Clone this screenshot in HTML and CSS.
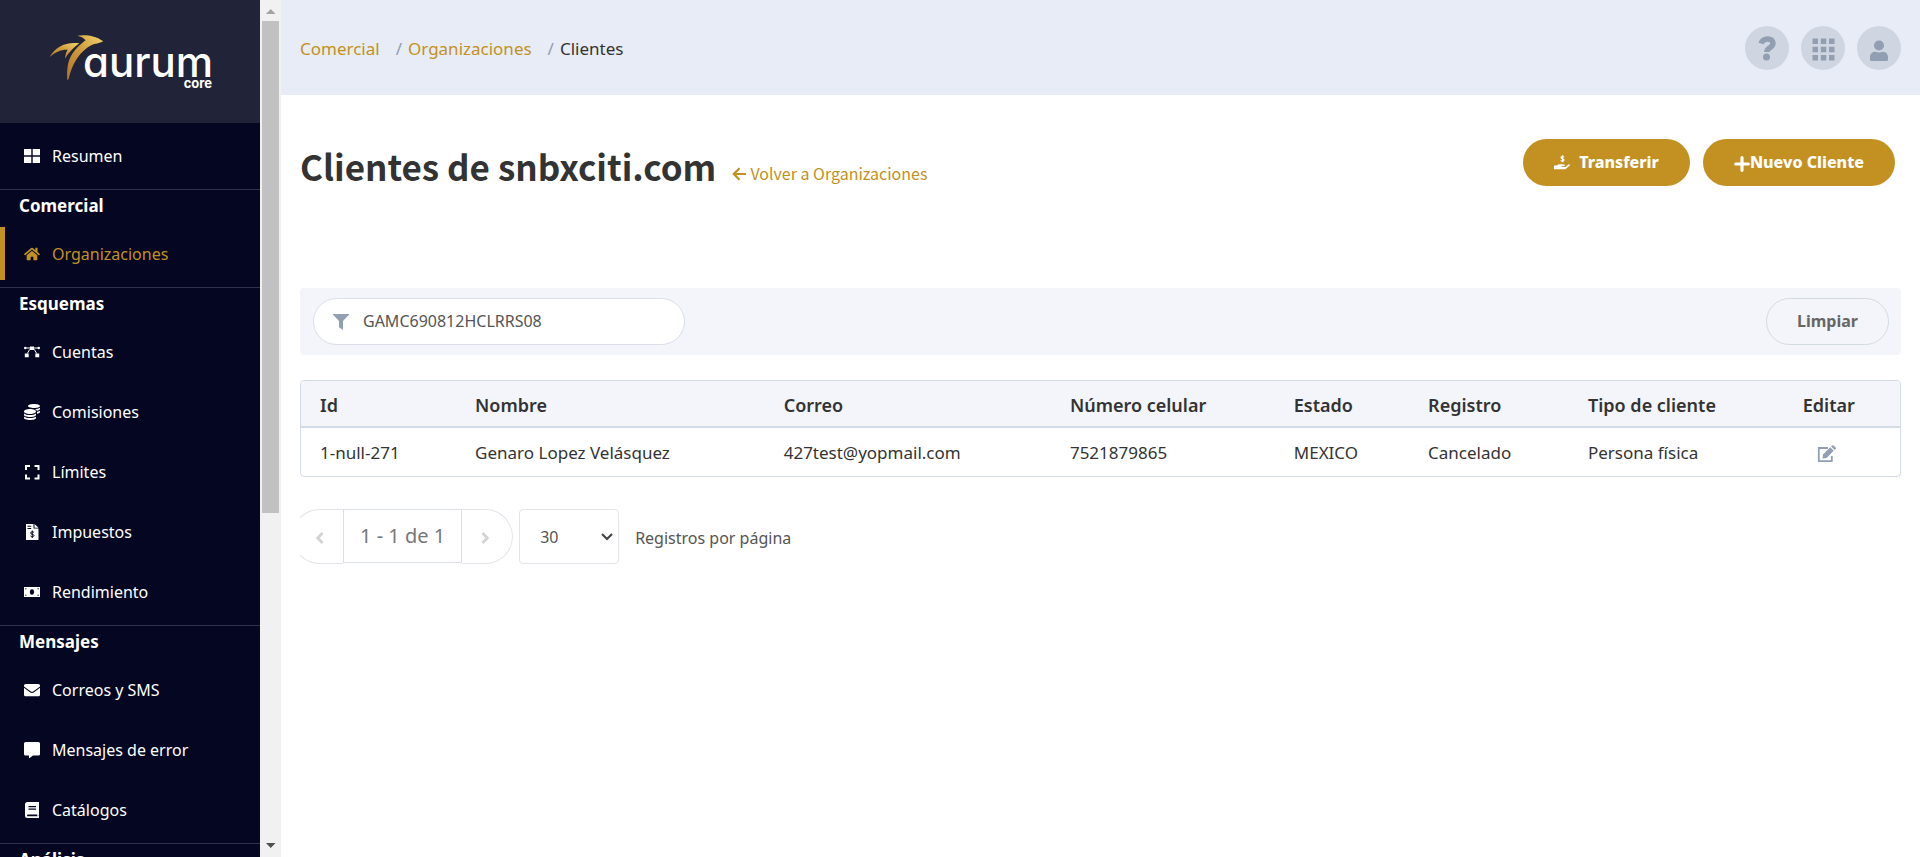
FILE: index.html
```html
<!DOCTYPE html>
<html lang="es">
<head>
<meta charset="utf-8">
<title>Clientes de snbxciti.com</title>
<link rel="stylesheet" href="styles.css">
</head>
<body>
<div class="app">
  <aside class="sidebar">
    <div class="brand">
      <svg class="logo" viewBox="0 0 168 60" role="img" aria-label="aurum core">
        <defs>
          <linearGradient id="gold" x1="0" y1="1" x2="1" y2="0">
            <stop offset="0" stop-color="#b0742a"/>
            <stop offset=".5" stop-color="#cf9a3c"/>
            <stop offset="1" stop-color="#f3d36b"/>
          </linearGradient>
        </defs>
        <g transform="scale(.33333) translate(-144 -90)" fill="url(#gold)">
          <path d="M232 107C255 103 287 106 310 124C298 131 285 131 275 135C240 153 216 190 206 237L202 241C199 205 205 180 216 163C228 144 246 129 257 121C251 113 242 109 232 107Z"/>
          <path d="M149 171C165 140 200 124 238 130C226 139 216 148 209 157C203 163 199 169 196 176C195 165 199 156 203 149C184 148 165 156 149 171Z"/>
        </g>
        <text class="logo-name" x="165" y="47">aurum</text>
        <text class="logo-sub" x="164" y="58">core</text>
      </svg>
    </div>
    <nav class="nav">
      <div class="nav-group nav-group-first">
        <a class="nav-item" href="#"><svg class="icon" viewBox="0 0 16 16"><path d="M0 1h7.3v6.3H0zM8.7 1H16v6.3H8.700zM0 8.700h7.300V15H0zM8.700 8.700H16V15H8.700z"/></svg>Resumen</a>
      </div>
      <div class="nav-group">
        <h2 class="nav-title">Comercial</h2>
        <a class="nav-item active" href="#"><svg class="icon" viewBox="0 0 576 512"><path d="M280.400 148.300L96 300.100V464a16 16 0 0 0 16 16l112.100-.3a16 16 0 0 0 15.900-16V368a16 16 0 0 1 16-16h64a16 16 0 0 1 16 16v95.600a16 16 0 0 0 16 16.100L464 480a16 16 0 0 0 16-16V300L295.700 148.300a12.200 12.200 0 0 0-15.300 0zM571.600 251.500L488 182.600V44a12 12 0 0 0-12-12h-56a12 12 0 0 0-12 12v72.600L318.500 43a48 48 0 0 0-61 0L4.300 251.500a12 12 0 0 0-1.600 16.900l25.500 31a12 12 0 0 0 16.900 1.600l235.200-193.700a12.200 12.200 0 0 1 15.300 0L530.900 301a12 12 0 0 0 16.900-1.600l25.500-31a12 12 0 0 0-1.700-16.900z"/></svg>Organizaciones</a>
      </div>
      <div class="nav-group">
        <h2 class="nav-title">Esquemas</h2>
        <a class="nav-item" href="#"><svg class="icon" viewBox="0 0 16 16"><path d="M6 2.500h4v3.500H6zM.8 9.500h3.900v3.800H.8zM11.300 9.500h3.900v3.800h-3.900z"/><circle cx="1.200" cy="4" r="1.200"/><circle cx="14.800" cy="4" r="1.200"/><path d="M1.500 4H6M10 4h4.500M5.800 5.300L3.300 9.500M10.200 5.300l2.500 4.200" fill="none" stroke="currentColor"/></svg>Cuentas</a>
        <a class="nav-item" href="#"><svg class="icon" viewBox="0 0 512 512"><path d="M0 405.300V448c0 35.300 86 64 192 64s192-28.700 192-64v-42.700C342.700 434.400 267.200 448 192 448S41.300 434.400 0 405.300zM320 128c106 0 192-28.700 192-64S426 0 320 0 128 28.700 128 64s86 64 192 64zM0 300.400V352c0 35.300 86 64 192 64s192-28.700 192-64v-51.600c-41.300 34-116.900 51.600-192 51.600S41.300 334.400 0 300.400zm416 11c57.300-11.100 96-31.700 96-55.400v-42.700c-23.200 16.400-57.300 27.600-96 34.500v63.600zM192 160C86 160 0 195.800 0 240s86 80 192 80 192-35.800 192-80-86-80-192-80zm219.300 56.300c60-10.800 100.700-32 100.700-56.300v-42.700c-35.500 25.100-96.500 38.600-160.700 41.800 29.500 14.300 51.200 33.500 60 57.200z"/></svg>Comisiones</a>
        <a class="nav-item" href="#"><svg class="icon" viewBox="0 0 16 16"><path d="M6 2H2v4M10.500 2h4v4M2 10.500v4h4M14.500 10.500v4h-4" fill="none" stroke="currentColor" stroke-width="2"/></svg>Límites</a>
        <a class="nav-item" href="#"><svg class="icon" viewBox="0 0 16 16"><path fill-rule="evenodd" d="M2 0h7.500v4.500H14.500V16H2zM3.500 1.700v1h3.700v-1zM3.500 4v1h3.700V4z"/><path d="M10.500 0L14.500 3.700H10.500z"/><path d="M10 8.500C9.500 7.600 6.600 7.500 6.600 9s3.400 1 3.400 2.500-3 1.500-3.500.5M8.250 6.500v7.500" fill="none" stroke="#040622"/></svg>Impuestos</a>
        <a class="nav-item" href="#"><svg class="icon" viewBox="0 0 16 16"><path fill-rule="evenodd" d="M0 3h16v10H0zM1.300 5.600Q2.600 5.600 2.600 4.300H1.300zM14.700 5.600Q13.400 5.600 13.400 4.300h1.300zM1.300 10.400q1.300 0 1.300 1.300H1.300zM14.700 10.400q-1.300 0-1.300 1.300h1.300zM8 5.200C5.200 5.200 5.200 10.800 8 10.800s2.800-5.600 0-5.600z"/></svg>Rendimiento</a>
      </div>
      <div class="nav-group">
        <h2 class="nav-title">Mensajes</h2>
        <a class="nav-item" href="#"><svg class="icon" viewBox="0 0 16 16"><path d="M1.500 2h13A1.500 1.500 0 0 1 16 3.500v.9L9.500 9.300Q8 10.300 6.500 9.300L0 4.400v-.9A1.500 1.500 0 0 1 1.500 2z"/><path d="M0 5.800l5.900 4.400Q8 11.600 10.100 10.200L16 5.800v7a1.500 1.500 0 0 1-1.500 1.500h-13A1.500 1.500 0 0 1 0 12.800z"/></svg>Correos y SMS</a>
        <a class="nav-item" href="#"><svg class="icon" viewBox="0 0 16 16"><path d="M1.500 0h13A1.500 1.500 0 0 1 16 1.500v10.500a1.500 1.500 0 0 1-1.500 1.500H9L5 16.500v-3H1.500A1.500 1.500 0 0 1 0 12V1.500A1.500 1.500 0 0 1 1.500 0z"/></svg>Mensajes de error</a>
        <a class="nav-item" href="#"><svg class="icon" viewBox="0 0 16 16"><path fill-rule="evenodd" d="M3.500 0H15v12.500q-.6 1 0 2.300V16H3.500A2.500 2.500 0 0 1 1 13.500v-11A2.500 2.500 0 0 1 3.500 0zM4.500 4v1.200h7.500V4zM4.500 6.500v1.200h7.500V6.500zM3.700 12.500q-1.700.9 0 1.800h9.600v-1.800z"/></svg>Catálogos</a>
      </div>
      <div class="nav-group">
        <h2 class="nav-title">Análisis</h2>
      </div>
    </nav>
  </aside>
  <div class="scrollbar" aria-hidden="true">
    <svg class="scroll-arrow scroll-up" viewBox="0 0 21 21"><path d="M6 14h9.500L10.750 9z"/></svg>
    <div class="scroll-track"><div class="scroll-thumb"></div></div>
    <svg class="scroll-arrow" viewBox="0 0 21 21"><path d="M6 7h9.500L10.750 12z"/></svg>
  </div>
  <div class="content">
    <header class="topbar">
      <nav class="crumbs" aria-label="Ruta">
        <a href="#">Comercial</a><span class="sep">/</span><a href="#">Organizaciones</a><span class="sep">/</span><span>Clientes</span>
      </nav>
      <div class="tools">
        <button class="tool" aria-label="Ayuda"><svg viewBox="0 0 44 44"><path d="M16 17.500C18 11.500 28 11.500 28 17.300C28 22 21.800 21.500 21.800 26" fill="none" stroke="currentColor" stroke-width="5.500"/><circle cx="21.500" cy="31" r="3.500"/></svg></button>
        <button class="tool" aria-label="Aplicaciones"><svg viewBox="0 0 44 44"><path d="M11.500 12.500h5.500v5.500h-5.500zM19.800 12.500h5.500v5.500h-5.500zM28 12.500h5.500v5.500h-5.500zM11.500 20.800h5.500v5.500h-5.500zM19.800 20.800h5.500v5.500h-5.500zM28 20.800h5.500v5.500h-5.500zM11.500 29h5.500v5.500h-5.500zM19.800 29h5.500v5.500h-5.500zM28 29h5.500v5.500h-5.500z"/></svg></button>
        <button class="tool" aria-label="Usuario"><svg viewBox="0 0 44 44"><circle cx="22" cy="19.500" r="5"/><path d="M13 34.500v-3c0-4 2.500-5.700 5.500-5.700q3.500 1.200 7 0c3 0 5.500 1.700 5.500 5.700v2q0 1.500-1.500 1.500h-15Q13 35 13 34z"/></svg></button>
      </div>
    </header>
    <main class="main">
      <div class="heading">
        <div class="heading-text">
          <h1>Clientes de snbxciti.com</h1>
          <a class="back" href="#"><svg viewBox="0 0 14 14"><path d="M14 7H2M7.500 1.200L1.800 7l5.700 5.800" fill="none" stroke="currentColor" stroke-width="2.200"/></svg>Volver a Organizaciones</a>
        </div>
        <div class="actions">
          <button class="btn btn-transfer"><svg viewBox="0 0 16 16"><path d="M0 10.500h2.500q1.700-1.300 3.500-1.300h4q1 .2.900 1.200-.2.900-1.200.9H7.500v.6h4L14.700 9.300q1.300-.2 1.300 1L11.500 14.300H0z"/><path d="M10 2.300C9.500 1.200 7 1.300 7 2.600S10 3.500 10 5 7.300 6.400 6.800 5.200M8.500.300v7" fill="none" stroke="currentColor" stroke-width="1.200"/></svg>Transferir</button>
          <button class="btn btn-new"><svg viewBox="0 0 14 14"><path d="M7 1.500v11M1.500 7h11" stroke="currentColor" stroke-width="2.800" stroke-linecap="round"/></svg>Nuevo Cliente</button>
        </div>
      </div>
      <div class="filter">
        <label class="search">
          <svg viewBox="0 0 16 16"><path d="M0 0h16q.2.600-.300 1.100L10 7v9L6 13.300V7L.300 1.100Q-.200.600 0 0z"/></svg>
          <input type="text" value="GAMC690812HCLRRS08" aria-label="Filtrar clientes">
        </label>
        <button class="clear">Limpiar</button>
      </div>
      <div class="table-box">
        <table>
          <colgroup><col class="c-id"><col class="c-name"><col class="c-mail"><col class="c-phone"><col class="c-state"><col class="c-reg"><col class="c-type"><col class="c-edit"></colgroup>
          <thead><tr><th>Id</th><th>Nombre</th><th>Correo</th><th>Número celular</th><th>Estado</th><th>Registro</th><th>Tipo de cliente</th><th class="edit-cell">Editar</th></tr></thead>
          <tbody><tr><td>1-null-271</td><td>Genaro Lopez Velásquez</td><td>427test@yopmail.com</td><td>7521879865</td><td>MEXICO</td><td>Cancelado</td><td>Persona física</td><td class="edit-cell"><button class="edit" aria-label="Editar"><svg viewBox="0 0 20 18"><path d="M11 3H1.800v13.200h13V11" fill="none" stroke="currentColor" stroke-width="1.800"/><path d="M5.500 13.500l.5-4L13.300 2.300l3.400 3.400L9.500 13z"/><path d="M14.100 1.500l1-1q.8-.7 1.600 0l1.900 1.900q.7.800 0 1.600l-1 1z"/></svg></button></td></tr></tbody>
        </table>
      </div>
      <div class="pager">
        <div class="pages">
          <button class="page-btn prev" aria-label="Anterior"><svg viewBox="0 0 10 14"><path d="M7.500 2L2.700 7l4.800 5" fill="none" stroke="currentColor" stroke-width="2.800"/></svg></button>
          <span class="range">1 - 1 de 1</span>
          <button class="page-btn next" aria-label="Siguiente"><svg viewBox="0 0 10 14"><path d="M2.500 2l4.800 5-4.800 5" fill="none" stroke="currentColor" stroke-width="2.800"/></svg></button>
        </div>
        <div class="select">
          <select id="size"><option>30</option></select>
          <svg viewBox="0 0 12 8"><path d="M1 1l5 5 5-5" fill="none" stroke="currentColor" stroke-width="2.200"/></svg>
        </div>
        <label class="size-label" for="size">Registros por página</label>
      </div>
    </main>
  </div>
</div>
</body>
</html>
```
FILE: styles.css
```css
* { box-sizing: border-box; }

body {
  margin: 0;
  background: #fff;
  color: #333;
  font-family: "Noto Sans", sans-serif;
  font-size: 16px;
  line-height: 24px;
}

a { text-decoration: none; }
button, input, select { font: inherit; color: inherit; margin: 0; }
svg { display: block; fill: currentColor; }

.app { display: flex; min-height: 100vh; }

/* Sidebar */
.sidebar {
  flex: 0 0 260px;
  height: 100vh;
  overflow: hidden;
  background: #040622;
  color: #fff;
}
.brand { padding: 30px 44px 33px 48px; background: #212338; }
.logo { width: 168px; height: 60px; }
.logo-name {
  fill: #fff;
  font-family: Inter, sans-serif;
  font-size: 42px;
  font-weight: 500;
  font-feature-settings: "cv11";
  text-anchor: end;
}
.logo-sub {
  fill: #fff;
  font-family: Inter, sans-serif;
  font-size: 13px;
  font-weight: 700;
  text-anchor: end;
}
.nav-group { border-top: 1px solid #2e3150; }
.nav-group-first { border-top: 0; padding-top: 6px; }
.nav-title {
  margin: 0;
  padding: 4px 19px 9px;
  font-size: 17px;
  font-weight: 700;
  line-height: 24px;
}
.nav-item {
  display: flex;
  align-items: center;
  gap: 12px;
  height: 53px;
  margin-bottom: 7px;
  padding-left: 24px;
  color: #fff;
}
.nav-item.active {
  padding-left: 19px;
  border-left: 5px solid #c29121;
  color: #c29121;
}
.icon { width: 16px; height: 16px; }

.scrollbar {
  flex: 0 0 21px;
  display: flex;
  flex-direction: column;
  height: 100vh;
  background: #f1f1f1;
}
.scroll-arrow { width: 21px; height: 21px; color: #505050; }
.scroll-up { color: #a3a3a3; }
.scroll-track { flex: 1; padding: 0 2px; }
.scroll-thumb { height: 60.4%; background: #c1c1c1; }

/* Top bar */
.content { flex: 1; min-width: 0; }
.topbar {
  display: flex;
  align-items: center;
  justify-content: space-between;
  height: 95px;
  padding: 0 19px;
  background: #e8ecf7;
}
.crumbs { display: flex; padding-top: 2px; font-size: 17px; }
.crumbs a, .back { color: #c29121; }
.sep { margin: 0 6px 0 16px; color: #929eb2; }
.tools { display: flex; gap: 12px; }
.tool {
  width: 44px;
  height: 44px;
  padding: 0;
  border: 0;
  border-radius: 50%;
  background: #cfd6e2;
  color: #929eb2;
}

/* Page heading */
.main { padding: 44px 19px 24px; }
.heading {
  display: flex;
  align-items: flex-start;
  justify-content: space-between;
  margin-bottom: 96px;
  padding-right: 6px;
}
.heading-text {
  display: flex;
  align-items: baseline;
  gap: 16px;
  font-family: "Noto Sans CJK JP", "Noto Sans", sans-serif;
}
h1 { margin: 0; font-size: 35px; font-weight: 600; line-height: 53px; }
.back { display: flex; align-items: center; gap: 4px; font-size: 16px; }
.back svg { width: 14px; height: 14px; margin-top: 3px; }
.actions { display: flex; gap: 13px; }
.btn {
  display: flex;
  align-items: center;
  height: 47px;
  padding: 0 31px 2px;
  border: 0;
  border-radius: 24px;
  background: #c29121;
  color: #fff;
  font-weight: 800;
}
.btn-transfer { gap: 9px; }
.btn-transfer svg { width: 16px; height: 16px; margin-top: 3px; }
.btn-new svg { width: 16px; height: 16px; margin-top: 4px; }

/* Filter */
.filter {
  display: flex;
  align-items: center;
  justify-content: space-between;
  margin-bottom: 25px;
  padding: 10px 12px 10px 13px;
  border-radius: 4px;
  background: #f4f5fb;
}
.search {
  display: flex;
  align-items: center;
  gap: 14px;
  width: 372px;
  height: 47px;
  padding: 0 19px;
  border: 1px solid #d9dee8;
  border-radius: 24px;
  background: #fff;
}
.search svg { width: 16px; height: 16px; color: #929eb2; }
.search input {
  flex: 1;
  min-width: 0;
  padding: 0 0 2px;
  border: 0;
  outline: 0;
  background: none;
  color: #555;
}
.clear {
  height: 47px;
  padding: 0 30px 2px;
  border: 1px solid #d3dbe2;
  border-radius: 24px;
  background: none;
  color: #666;
  font-weight: 700;
}

/* Table */
.table-box {
  overflow: hidden;
  margin-bottom: 32px;
  border: 1px solid #d3dbe4;
  border-radius: 4px;
}
table { width: 100%; table-layout: fixed; border-collapse: collapse; font-size: 17px; }
.c-id { width: 9.7%; }
.c-name { width: 19.3%; }
.c-mail { width: 17.9%; }
.c-phone { width: 14%; }
.c-state { width: 8.4%; }
.c-reg { width: 10%; }
.c-type { width: 11.8%; }
.c-edit { width: 8.9%; }
th, td { padding: 13px 19px 11px; text-align: left; font-weight: 400; }
th { padding: 12px 19px 9px; border-bottom: 2px solid #d3dbe4; background: #f4f5fb; font-size: 18px; font-weight: 600; }
.edit-cell { text-align: center; }
.edit { padding: 0 4px 0 0; border: 0; background: none; color: #929eb2; vertical-align: middle; }
.edit svg { width: 20px; height: 18px; }

/* Pagination */
.pager { display: flex; align-items: center; overflow: hidden; }
.pages { display: flex; margin-left: -8px; }
.page-btn {
  display: flex;
  align-items: center;
  justify-content: center;
  width: 51px;
  height: 55px;
  padding: 2px 0 0;
  border: 1px solid #e1e4e9;
  background: none;
  color: #d3d3d3;
}
.page-btn svg { width: 10px; height: 14px; }
.prev { padding-left: 4px; border-right: 0; border-radius: 28px 0 0 28px; }
.next { padding-right: 4px; border-left: 0; border-radius: 0 28px 28px 0; }
.range {
  height: 54px;
  padding: 0 16px;
  border: 1px solid #d9dee8;
  color: #777;
  font-size: 20px;
  line-height: 52px;
}
.select { display: grid; align-items: center; margin: 0 16px 0 6px; }
.select select {
  grid-area: 1 / 1;
  width: 100px;
  height: 55px;
  padding: 0 20px;
  border: 1px solid #e1e4e9;
  border-radius: 4px;
  appearance: none;
  background: #fff;
  color: #555;
}
.select svg {
  grid-area: 1 / 1;
  justify-self: end;
  width: 12px;
  height: 8px;
  margin-right: 6px;
  color: #444;
  pointer-events: none;
}
.size-label { padding-top: 2px; color: #555; }
```
